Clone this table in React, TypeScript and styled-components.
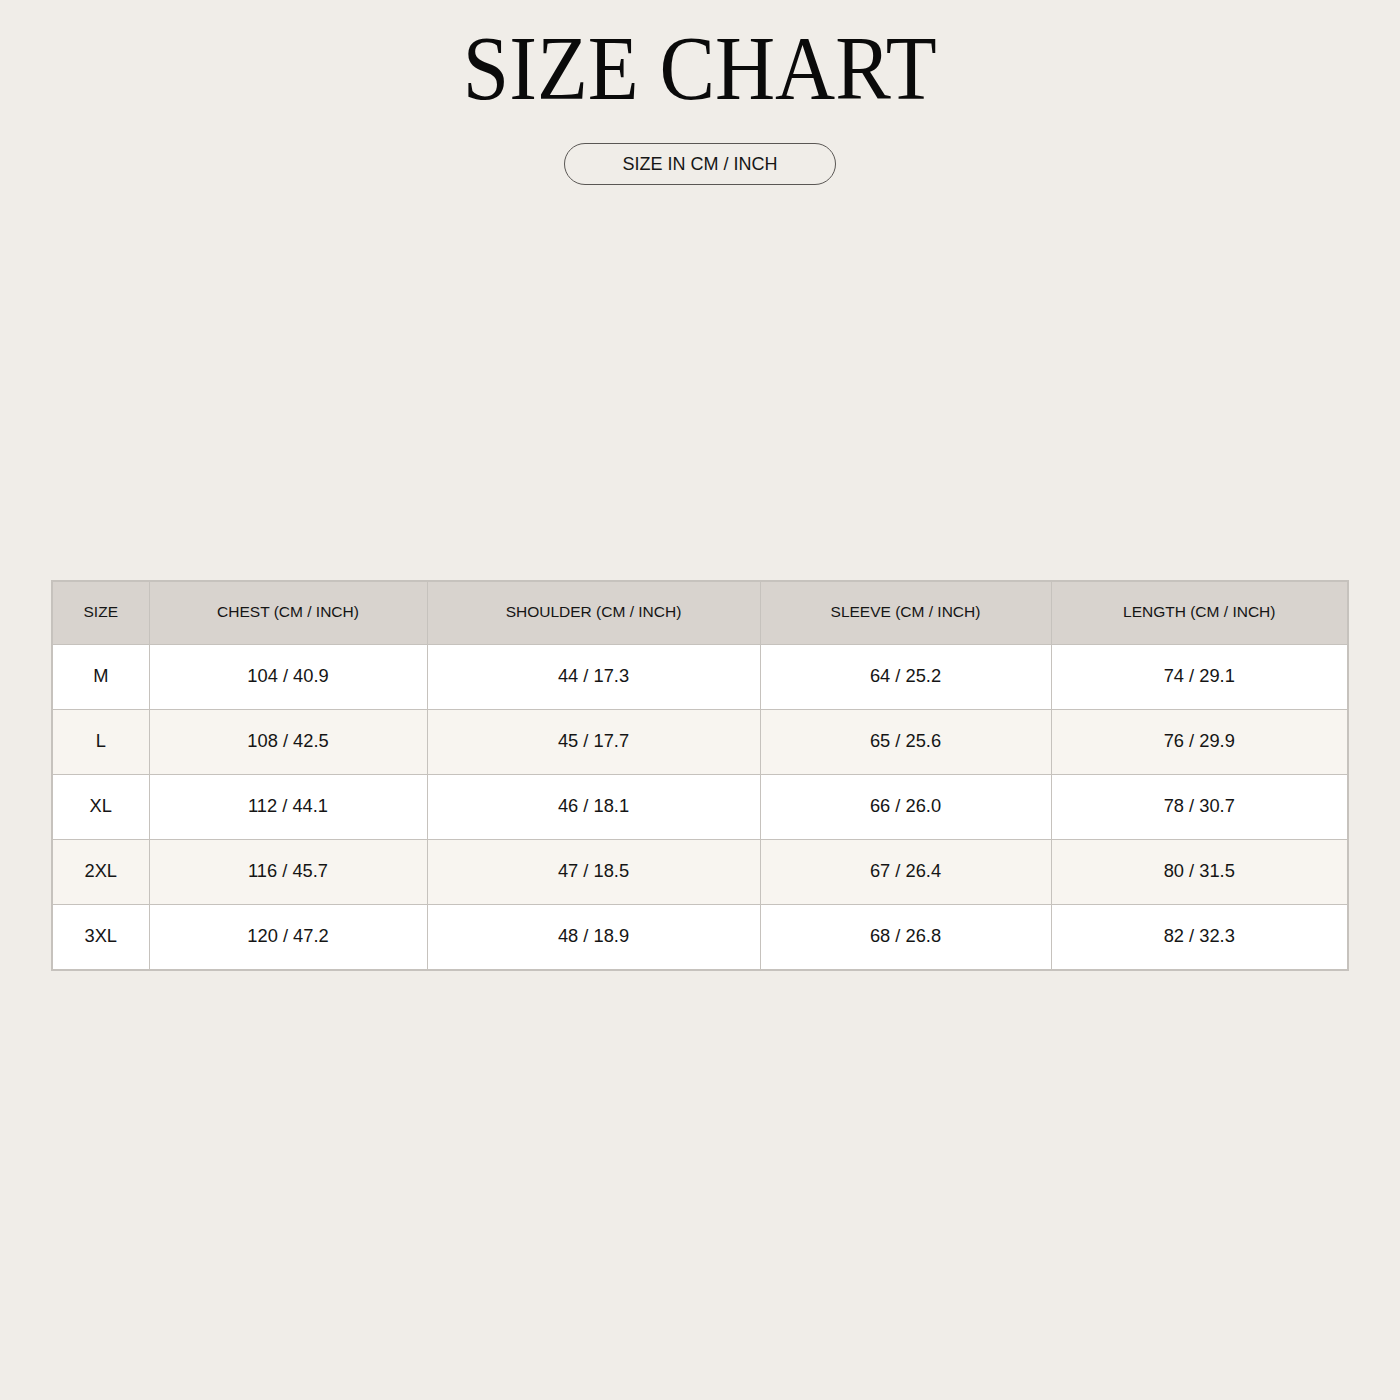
import React from "react";
import styled, { createGlobalStyle } from "styled-components";

const GlobalStyle = createGlobalStyle`
	html, body {
		margin: 0;
		padding: 0;
		background: #f0ede8;
	}
	body {
		font-family: "Liberation Sans", Arial, sans-serif;
		color: #111;
	}
`;

const columns = [
	{ label: "SIZE", width: 97 },
	{ label: "CHEST (CM / INCH)", width: 278 },
	{ label: "SHOULDER (CM / INCH)", width: 333 },
	{ label: "SLEEVE (CM / INCH)", width: 291 },
	{ label: "LENGTH (CM / INCH)", width: 297 },
];

const rows = [
	["M", "104 / 40.9", "44 / 17.3", "64 / 25.2", "74 / 29.1"],
	["L", "108 / 42.5", "45 / 17.7", "65 / 25.6", "76 / 29.9"],
	["XL", "112 / 44.1", "46 / 18.1", "66 / 26.0", "78 / 30.7"],
	["2XL", "116 / 45.7", "47 / 18.5", "67 / 26.4", "80 / 31.5"],
	["3XL", "120 / 47.2", "48 / 18.9", "68 / 26.8", "82 / 32.3"],
];

const App: React.FC = () => {
	return (
		<Page>
			<GlobalStyle />
			<Header>
				<Title>SIZE CHART</Title>
				<UnitPill>SIZE IN CM / INCH</UnitPill>
			</Header>
			<Table>
				<colgroup>
					{columns.map((c) => (
						<col key={c.label} style={{ width: c.width }} />
					))}
				</colgroup>
				<thead>
					<tr>
						{columns.map((c) => (
							<HeadCell key={c.label}>{c.label}</HeadCell>
						))}
					</tr>
				</thead>
				<tbody>
					{rows.map((r, i) => (
						<Row key={r[0]} $alt={i % 2 === 1}>
							{r.map((v, j) => (
								<Cell key={j}>{v}</Cell>
							))}
						</Row>
					))}
				</tbody>
			</Table>
		</Page>
	);
};

const Page = styled.div`
	width: 1400px;
	height: 1400px;
	box-sizing: border-box;
	padding: 0 52px;
	display: flex;
	flex-direction: column;
	align-items: center;
`;

const Header = styled.div`
	display: flex;
	flex-direction: column;
	align-items: center;
	padding-top: 22px;
`;

const Title = styled.h1`
	margin: 0;
	font-family: "Liberation Serif", "Times New Roman", serif;
	font-weight: 400;
	font-size: 92px;
	line-height: 92px;
	color: #0a0a0a;
	transform: scaleX(0.905);
	white-space: nowrap;
`;

const UnitPill = styled.div`
	margin-top: 29px;
	width: 272px;
	height: 42px;
	box-sizing: border-box;
	border: 1px solid #5a5754;
	border-radius: 21px;
	display: flex;
	align-items: center;
	justify-content: center;
	font-size: 18px;
	color: #161616;
`;

const Table = styled.table`
	margin-top: 395px;
	width: 1297px;
	border-collapse: collapse;
	table-layout: fixed;
	border: 2px solid #c6c2bd;
`;

const HeadCell = styled.th`
	height: 59px;
	padding: 0 0 3px;
	background: #d8d3ce;
	border: 1px solid #c6c2bd;
	font-weight: 400;
	font-size: 15.5px;
	color: #151515;
	text-align: center;
`;

const Row = styled.tr<{ $alt: boolean }>`
	background: ${(p) => (p.$alt ? "#f8f5f0" : "#ffffff")};
`;

const Cell = styled.td`
	height: 62px;
	padding: 0 0 2px;
	border: 1px solid #c6c2bd;
	font-size: 18.3px;
	color: #151515;
	text-align: center;
`;

export default App;
